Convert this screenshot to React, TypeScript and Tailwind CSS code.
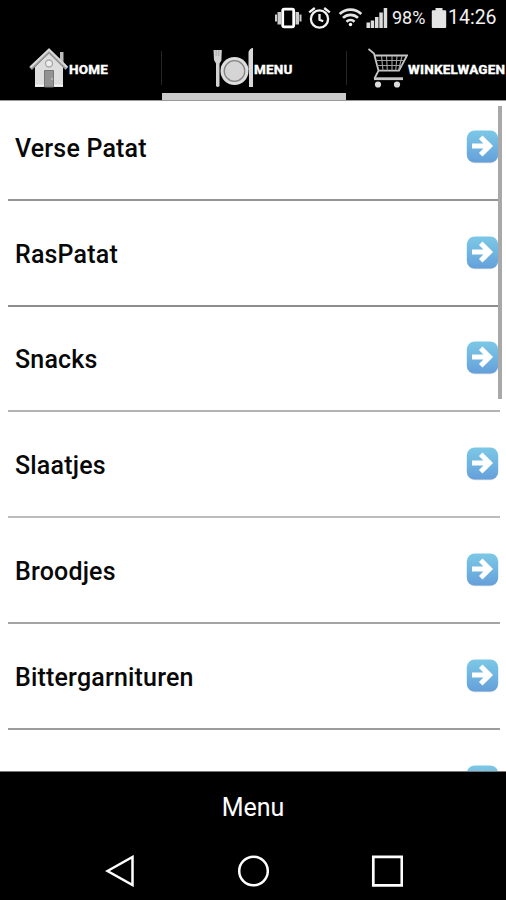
import type { ReactNode } from "react";

const categories = [
  { name: "Verse Patat", line: "bg-[#949494]" },
  { name: "RasPatat", line: "bg-[#8c8c8c]" },
  { name: "Snacks", line: "bg-[#b4b4b4]" },
  { name: "Slaatjes", line: "bg-[#bcbcbc]" },
  { name: "Broodjes", line: "bg-[#a4a4a4]" },
  { name: "Bittergarnituren", line: "bg-[#9c9c9c]" },
  { name: "", line: "bg-[#949494]" },
];

function StatusBar() {
  return (
    <div className="flex h-9 shrink-0 items-center pl-[274px] text-[#f2f2f2]">
      <svg className="h-[22px] w-[28px] shrink-0" viewBox="0 0 28 22" fill="#ccc">
        <rect x="8.7" y="2.2" width="11" height="17.6" rx="1.5" fill="none" stroke="#fff" strokeWidth="2.8" />
        <path d="M3.5 5H7v12.5H3.5zM1 7.5h2v7H1zM21.5 5H25v12.5h-3.5zM25.5 7.5h2v7h-2z" />
      </svg>
      <svg className="ml-[6px] h-[22px] w-[24px] shrink-0" viewBox="0 0 24 22" fill="none" stroke="#f2f2f2" strokeWidth="2.3">
        <circle cx="11.5" cy="12" r="8.6" />
        <path d="M1.2 5.4 6.8 1M16.2 1l5.6 4.4M11.5 7v5.7l3.7 1.6" />
      </svg>
      <svg className="ml-[6px] h-[22px] w-[25px] shrink-0" viewBox="0 0 25 22" fill="none" stroke="#e4e4e4" strokeWidth="2.7">
        <path d="M1.7 7a15.5 15.5 0 0 1 21.6 0M5 10.9a10.7 10.7 0 0 1 15 0M8.5 14.7a5.8 5.8 0 0 1 8 0" />
        <circle cx="12.5" cy="17.5" r="1.7" fill="#fff" stroke="none" />
      </svg>
      <svg className="ml-[3px] h-[22px] w-[22px] shrink-0" viewBox="0 0 22 22" fill="#ddd">
        <path d="M.5 15.5H4V21H.5zM4.7 13.5h3.5V21H4.7zM9 10h3.5v11H9zM13.3 5.5h3.5V21h-3.5zM17.7 1h3.5v20h-3.5z" />
      </svg>
      <span className="ml-[4px] w-[36px] shrink-0 text-[18px] leading-none">98%</span>
      <svg className="ml-[3px] h-[22px] w-[16px] shrink-0" viewBox="0 0 16 22" fill="#e4e4e4">
        <path d="M4.5 1h7v2.2h2.7a1 1 0 0 1 1 1V20a1 1 0 0 1-1 1H1.8a1 1 0 0 1-1-1V4.2a1 1 0 0 1 1-1h2.7z" />
      </svg>
      <span className="ml-px text-[19.5px] leading-none">14:26</span>
    </div>
  );
}

function HomeIcon() {
  return (
    <svg className="h-10 w-10 shrink-0" viewBox="0 0 40 40">
      <path d="M31 4h3.5v12L31 13z" fill="#bbb" />
      <path d="M6 19 20 5l14 14v20H6z" fill="#dedede" />
      <path d="M1.5 20.5 20 3l18 17.5" fill="none" stroke="#999" strokeWidth="4" />
      <path d="M1.5 19.2 20 1.8l18 17.4" fill="none" stroke="#d8d8d8" strokeWidth="2.2" />
      <circle cx="20" cy="15.5" r="3.5" fill="#eee" stroke="#aaa" strokeWidth="1.4" />
      <path d="M15.5 22.5h9V39h-9z" fill="#929292" stroke="#777" />
      <path d="M6 37.5h9M25 37.5h9" stroke="#f5f5f5" strokeWidth="1.5" />
      <circle cx="23" cy="31" r=".8" fill="#ddd" />
    </svg>
  );
}

function PlateIcon() {
  return (
    <svg className="h-10 w-[41px] shrink-0" viewBox="0 0 41 40">
      <path d="M.5 2h8.300l-.4 10.500-1.900 3V38q-1.700 2-3.500 0V15.500L1 12z" fill="#d2d2d2" />
      <path d="M3.2 2v6M5.8 2v6" stroke="#999" strokeWidth=".7" />
      <path d="M35.5 4q1.500-4 4.500-4v39h-4V22h-.5z" fill="#d8d8d8" />
      <circle cx="21.5" cy="23" r="14" fill="#ddd" />
      <circle cx="21.5" cy="23" r="10.3" fill="#d5d5d5" stroke="#858585" strokeWidth="1.3" />
    </svg>
  );
}

function CartIcon() {
  return (
    <svg className="h-10 w-10 shrink-0" viewBox="0 0 40 40" fill="none" stroke="#c6c6c6">
      <path d="M.5 1 6 5.5 10.5 22.7 6.5 30.5M6.7 7.5H39L31 22.700H10.500" strokeWidth="1.8" />
      <path d="M8 12.5h28M9 17.5h25M13.5 8l1.5 14.5M18.5 8l.8 14.5M24 8v14.5M29 8l-1.3 14.5M34 8l-3.5 14.5" strokeWidth="1.1" stroke="#a0a0a0" />
      <path d="M6 30.7h29" strokeWidth="2.8" />
      <circle cx="10" cy="36.5" r="3.1" fill="#ddd" stroke="none" />
      <circle cx="29" cy="36.5" r="3.1" fill="#ddd" stroke="none" />
    </svg>
  );
}

function Tab({ icon, label, className }: { icon: ReactNode; label: string; className: string }) {
  return (
    <div className={`flex shrink-0 pt-3 text-[13.5px] font-extrabold leading-[42px] tracking-[0.22px] text-white ${className}`}>
      {icon}
      <span className="[-webkit-text-stroke:0.3px_white]">{label}</span>
    </div>
  );
}

function Divider() {
  return <div className="mt-[15px] h-[34px] w-px shrink-0 bg-[#252525]" />;
}

function ArrowIcon() {
  return (
    <svg className="h-[34px] w-[33px] shrink-0" viewBox="0 0 33 34">
      <defs>
        <linearGradient id="arrowBlue" x1="0" y1="0" x2="0" y2="1">
          <stop offset="0" stopColor="#7cc8e6" />
          <stop offset=".5" stopColor="#70b5e0" />
          <stop offset="1" stopColor="#659fda" />
        </linearGradient>
      </defs>
      <rect x="1" y="1.3" width="31" height="32" rx="8" fill="#b9c5cd" opacity=".6" />
      <rect x=".8" y=".5" width="31.4" height="32" rx="8" fill="url(#arrowBlue)" />
      <path d="M8.5 16h14M16.5 9l7 7-7 7" fill="none" stroke="#fff" strokeWidth="5" strokeLinecap="square" />
    </svg>
  );
}

export default function App() {
  return (
    <div className="flex h-[900px] w-[506px] flex-col overflow-hidden bg-black font-['Roboto',sans-serif]">
      <StatusBar />

      <div className="flex h-[65px] shrink-0 overflow-hidden border-b border-[#999]">
        <Tab icon={<HomeIcon />} label="HOME" className="w-[161px] pl-[29px]" />
        <Divider />
        <div className="flex w-[184px] shrink-0 flex-col justify-between">
          <Tab icon={<PlateIcon />} label="MENU" className="pl-[51px]" />
          <div className="h-[7px] bg-[#cbcbcb]" />
        </div>
        <Divider />
        <Tab icon={<CartIcon />} label="WINKELWAGEN" className="w-[184px] pl-[21px]" />
      </div>

      <div className="relative h-[670px] shrink-0 overflow-hidden bg-white">
        <div className="-mt-[6px] pl-2 pr-[6px]">
          {categories.map((item, i) => (
            <div key={i} className="flex h-[105.8px] flex-col">
              <div className="flex flex-1 items-center justify-between pl-[7px] pr-px">
                <span className="pt-[3.4px] text-[25px] font-medium tracking-[0.18px] text-[#080808]">{item.name}</span>
                <ArrowIcon />
              </div>
              <div className={`h-[2px] shrink-0 ${item.line}`} />
            </div>
          ))}
        </div>
        <div className="absolute right-[4px] top-[5px] h-[293px] w-1 bg-[#a8a8a8]" />
      </div>

      <div className="flex h-[72px] shrink-0 items-center justify-center border-t border-[#777] text-[25px] text-white">
        Menu
      </div>

      <div className="flex h-[55px] shrink-0 items-center pl-[105px]">
        <svg className="h-8 w-[30px]" viewBox="0 0 30 32" fill="none" stroke="#fff" strokeWidth="2.5">
          <path d="M2.5 16 27.5 2v28z" />
        </svg>
        <svg className="ml-[102px] h-8 w-8" viewBox="0 0 32 32" fill="none" stroke="#fff" strokeWidth="2.5">
          <circle cx="16.5" cy="16" r="14.3" />
        </svg>
        <svg className="ml-[102px] h-8 w-8" viewBox="0 0 32 32" fill="none" stroke="#fff" strokeWidth="2.7">
          <path d="M2.3 1.8h28.5v28.5H2.3z" />
        </svg>
      </div>
    </div>
  );
}
